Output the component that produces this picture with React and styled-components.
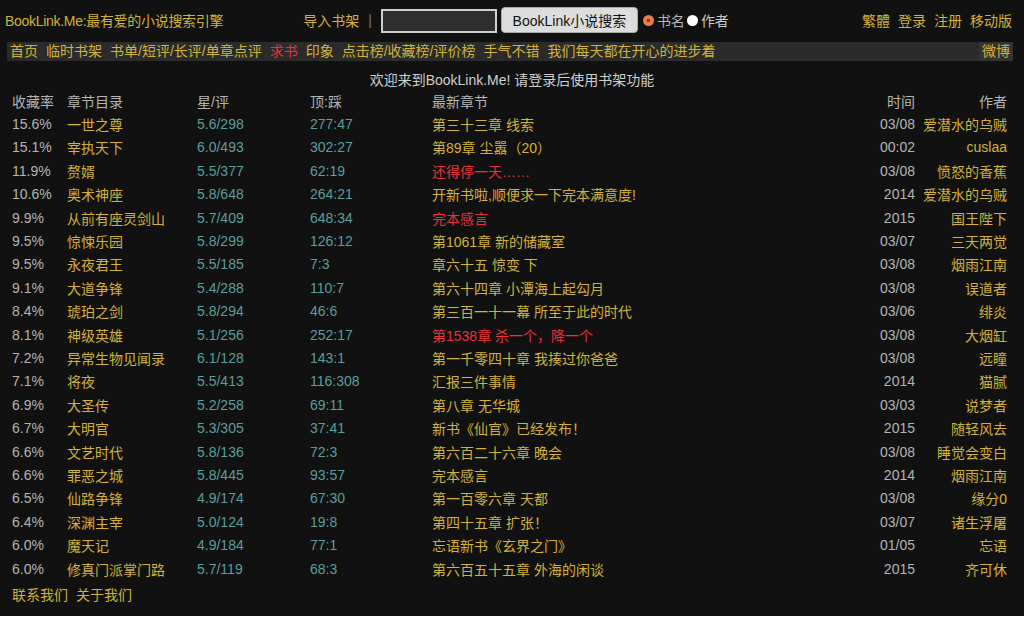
import React from "react";
import styled, { createGlobalStyle } from "styled-components";

const GlobalStyle = createGlobalStyle`
  html, body {
    margin: 0;
    padding: 0;
    background: #fff;
  }
  body {
    font-family: "Liberation Sans", "Noto Sans CJK SC", sans-serif;
    font-size: 14px;
  }
`;

const gold = "#d2b23a";
const grey = "#b4b4b4";
const teal = "#5b9e9c";
const red = "#e8313a";

const Page = styled.div`
  background: #111;
  height: 616px;
  overflow: hidden;
`;

const TopBar = styled.div`
  display: flex;
  align-items: center;
  height: 40px;
  padding: 0 12px 0 5px;
  color: ${gold};
`;

const Title = styled.div`
  color: ${gold};
  letter-spacing: -0.3px;
`;

const SearchGroup = styled.div`
  display: flex;
  align-items: center;
  margin-left: 80px;
`;

const Divider = styled.span`
  color: #777;
  margin: 0 9px 0 9px;
`;

const SearchInput = styled.input`
  box-sizing: border-box;
  width: 116px;
  height: 24px;
  background: #2e2e2e;
  border: 2px solid #cfcfcf;
  margin: 1px 4px 0 0;
  color: #eee;
  font-size: 13px;
`;

const SearchButton = styled.button`
  box-sizing: border-box;
  height: 26px;
  width: 137px;
  padding: 0;
  background: #dddddd;
  border: 1px solid #aaa;
  border-radius: 4px;
  color: #111;
  font-family: inherit;
  font-size: 14px;
`;

const Radio = styled.input.attrs({ type: "radio" })`
  appearance: none;
  width: 11px;
  height: 11px;
  border-radius: 50%;
  margin: 0 3px 0 5px;
  background: #fff;
  &:checked {
    background: radial-gradient(circle, #8a3b20 0 1.6px, #ee7a4c 2px);
  }
`;

const RadioLabel = styled.label`
  display: flex;
  align-items: center;
  color: ${(p) => (p.$active ? grey : "#c8c8c8")};
  font-size: 14px;
`;

const RightLinks = styled.div`
  display: flex;
  gap: 8px;
  margin-left: auto;
`;

const Link = styled.a`
  color: ${(p) => (p.$red ? red : gold)};
  text-decoration: none;
  white-space: nowrap;
`;

const Nav = styled.div`
  display: flex;
  align-items: center;
  height: 19px;
  margin: 2px 11px 0 7px;
  background: #2b2b2b;
  line-height: 17px;
`;

const NavItems = styled.div`
  display: flex;
  gap: 8px;
  padding-left: 3px;
  flex: 1;
`;

const NavSide = styled.div`
  background: #333;
  height: 100%;
  display: flex;
  align-items: center;
  padding: 0 3px;
`;

const Welcome = styled.div`
  text-align: center;
  color: #cfcfcf;
  margin-top: 10px;
  line-height: 18px;
`;

const Table = styled.table`
  table-layout: fixed;
  border-collapse: collapse;
  width: 995px;
  margin: 0 0 0 12px;
`;

const Th = styled.th`
  font-weight: normal;
  color: ${grey};
  text-align: ${(p) => (p.$right ? "right" : "left")};
  padding: 0;
  height: 23.4px;
  white-space: nowrap;
`;

const Td = styled.td`
  padding: 0;
  height: 23.4px;
  white-space: nowrap;
  overflow: hidden;
  color: ${(p) => p.$color || gold};
  text-align: ${(p) => (p.$right ? "right" : "left")};
`;

const Footer = styled.div`
  display: flex;
  gap: 8px;
  margin: 4px 0 0 12px;
`;

const rows = [
  ["15.6%", "一世之尊", "5.6/298", "277:47", "第三十三章 线索", "03/08", "爱潜水的乌贼"],
  ["15.1%", "宰执天下", "6.0/493", "302:27", "第89章 尘嚣（20）", "00:02", "cuslaa"],
  ["11.9%", "赘婿", "5.5/377", "62:19", "还得停一天……", "03/08", "愤怒的香蕉", true],
  ["10.6%", "奥术神座", "5.8/648", "264:21", "开新书啦,顺便求一下完本满意度!", "2014", "爱潜水的乌贼"],
  ["9.9%", "从前有座灵剑山", "5.7/409", "648:34", "完本感言", "2015", "国王陛下", true],
  ["9.5%", "惊悚乐园", "5.8/299", "126:12", "第1061章 新的储藏室", "03/07", "三天两觉"],
  ["9.5%", "永夜君王", "5.5/185", "7:3", "章六十五 惊变 下", "03/08", "烟雨江南"],
  ["9.1%", "大道争锋", "5.4/288", "110:7", "第六十四章 小潭海上起勾月", "03/08", "误道者"],
  ["8.4%", "琥珀之剑", "5.8/294", "46:6", "第三百一十一幕 所至于此的时代", "03/06", "绯炎"],
  ["8.1%", "神级英雄", "5.1/256", "252:17", "第1538章 杀一个，降一个", "03/08", "大烟缸", true],
  ["7.2%", "异常生物见闻录", "6.1/128", "143:1", "第一千零四十章 我揍过你爸爸", "03/08", "远瞳"],
  ["7.1%", "将夜", "5.5/413", "116:308", "汇报三件事情", "2014", "猫腻"],
  ["6.9%", "大圣传", "5.2/258", "69:11", "第八章 无华城", "03/03", "说梦者"],
  ["6.7%", "大明官", "5.3/305", "37:41", "新书《仙官》已经发布！", "2015", "随轻风去"],
  ["6.6%", "文艺时代", "5.8/136", "72:3", "第六百二十六章 晚会", "03/08", "睡觉会变白"],
  ["6.6%", "罪恶之城", "5.8/445", "93:57", "完本感言", "2014", "烟雨江南"],
  ["6.5%", "仙路争锋", "4.9/174", "67:30", "第一百零六章 天都", "03/08", "缘分0"],
  ["6.4%", "深渊主宰", "5.0/124", "19:8", "第四十五章 扩张！", "03/07", "诸生浮屠"],
  ["6.0%", "魔天记", "4.9/184", "77:1", "忘语新书《玄界之门》", "01/05", "忘语"],
  ["6.0%", "修真门派掌门路", "5.7/119", "68:3", "第六百五十五章 外海的闲谈", "2015", "齐可休"],
];

const navLinks = [
  "首页",
  "临时书架",
  "书单/短评/长评/单章点评",
  "求书",
  "印象",
  "点击榜/收藏榜/评价榜",
  "手气不错",
  "我们每天都在开心的进步着",
];

export default function App() {
  return (
    <Page>
      <GlobalStyle />
      <TopBar>
        <Title>BookLink.Me:最有爱的小说搜索引擎</Title>
        <SearchGroup>
          <Link>导入书架</Link>
          <Divider>|</Divider>
          <SearchInput />
          <SearchButton>BookLink小说搜索</SearchButton>
          <RadioLabel $active>
            <Radio name="t" defaultChecked />
            书名
          </RadioLabel>
          <RadioLabel>
            <Radio name="t" style={{ marginLeft: 2 }} />
            作者
          </RadioLabel>
        </SearchGroup>
        <RightLinks>
          <Link>繁體</Link>
          <Link>登录</Link>
          <Link>注册</Link>
          <Link>移动版</Link>
        </RightLinks>
      </TopBar>
      <Nav>
        <NavItems>
          {navLinks.map((n) => (
            <Link key={n} $red={n === "求书"}>
              {n}
            </Link>
          ))}
        </NavItems>
        <NavSide>
          <Link>微博</Link>
        </NavSide>
      </Nav>
      <Welcome>欢迎来到BookLink.Me! 请登录后使用书架功能</Welcome>
      <Table>
        <colgroup>
          <col style={{ width: 55 }} />
          <col style={{ width: 130 }} />
          <col style={{ width: 113 }} />
          <col style={{ width: 122 }} />
          <col />
          <col style={{ width: 70 }} />
          <col style={{ width: 92 }} />
        </colgroup>
        <thead>
          <tr>
            <Th>收藏率</Th>
            <Th>章节目录</Th>
            <Th>星/评</Th>
            <Th>顶:踩</Th>
            <Th>最新章节</Th>
            <Th $right>时间</Th>
            <Th $right>作者</Th>
          </tr>
        </thead>
        <tbody>
          {rows.map((r) => (
            <tr key={r[1]}>
              <Td $color={grey}>{r[0]}</Td>
              <Td>{r[1]}</Td>
              <Td $color={teal}>{r[2]}</Td>
              <Td $color={teal}>{r[3]}</Td>
              <Td $color={r[7] ? red : gold}>{r[4]}</Td>
              <Td $color={grey} $right>
                {r[5]}
              </Td>
              <Td $right>{r[6]}</Td>
            </tr>
          ))}
        </tbody>
      </Table>
      <Footer>
        <Link>联系我们</Link>
        <Link>关于我们</Link>
      </Footer>
    </Page>
  );
}
